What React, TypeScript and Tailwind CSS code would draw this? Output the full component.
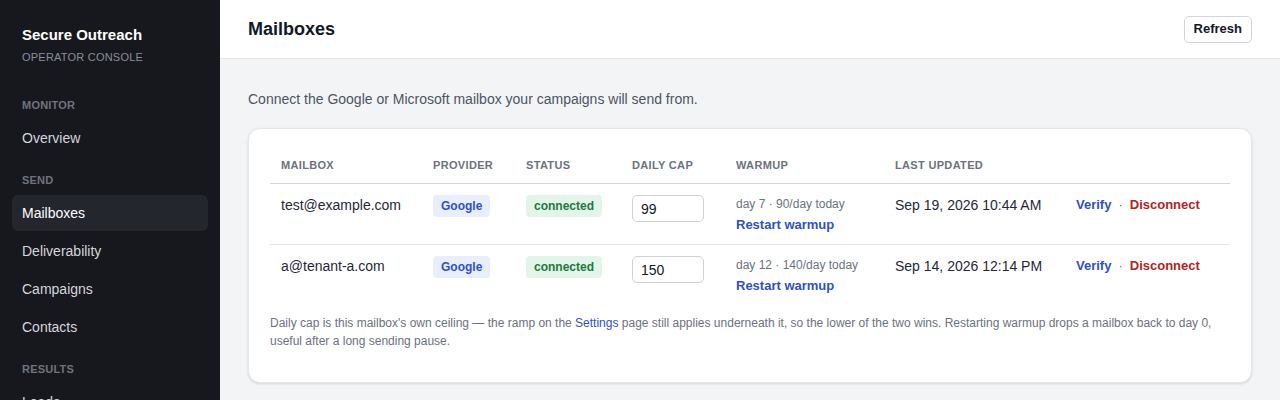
import { useState } from "react";

const navSections = [
  { label: "MONITOR", items: ["Overview"] },
  { label: "SEND", items: ["Mailboxes", "Deliverability", "Campaigns", "Contacts"] },
  { label: "RESULTS", items: ["Leads", "Replies"] },
];

const mailboxes = [
  {
    email: "test@example.com",
    provider: "Google",
    status: "connected",
    cap: "99",
    warmup: "day 7 · 90/day today",
    updated: "Sep 19, 2026 10:44 AM",
  },
  {
    email: "a@tenant-a.com",
    provider: "Google",
    status: "connected",
    cap: "150",
    warmup: "day 12 · 140/day today",
    updated: "Sep 14, 2026 12:14 PM",
  },
];

const Sidebar = () => (
  <aside className="w-[220px] shrink-0 bg-[#17181d] px-3 pt-[25px]">
    <div className="px-[10px]">
      <div className="text-[15px] font-bold leading-5 text-white">Secure Outreach</div>
      <div className="mt-[4px] text-[11px] leading-4 tracking-[0.02em] text-[#8a8e98]">
        OPERATOR CONSOLE
      </div>
    </div>
    <nav className="mt-8">
      {navSections.map((section) => (
        <div key={section.label} className="mb-[16px]">
          <div className="px-[10px] text-[11px] font-bold leading-4 tracking-[0.02em] text-[#6f737d]">
            {section.label}
          </div>
          <ul className="mt-[7px] flex flex-col gap-[2px]">
            {section.items.map((item) => (
              <li
                key={item}
                className={
                  item === "Mailboxes"
                    ? "flex h-9 items-center rounded-md bg-[#24262e] px-[10px] text-[14px] text-white"
                    : "flex h-9 items-center rounded-md px-[10px] text-[14px] text-[#d4d6db]"
                }
              >
                {item}
              </li>
            ))}
          </ul>
        </div>
      ))}
    </nav>
  </aside>
);

const MailboxRow = ({ row, last }: { row: (typeof mailboxes)[number]; last: boolean }) => {
  const [cap, setCap] = useState(row.cap);
  const cell = "px-[11px] pt-[11px] pb-[10px] align-top";
  return (
    <tr className={last ? "" : "border-b border-[#e5e7eb]"}>
      <td className={`${cell} text-[14px] leading-5 text-[#1f2937]`}>{row.email}</td>
      <td className={cell}>
        <span className="flex h-[22px] w-fit items-center rounded-[4px] bg-[#e8eefc] px-[8px] text-[12px] font-bold text-[#3050c8]">
          {row.provider}
        </span>
      </td>
      <td className={cell}>
        <span className="flex h-[22px] w-fit items-center rounded-[4px] bg-[#e3f4e8] px-[8px] text-[12px] font-bold text-[#1d7a3e]">
          {row.status}
        </span>
      </td>
      <td className={cell}>
        <input
          value={cap}
          onChange={(e) => setCap(e.target.value)}
          className="block h-[27px] w-[72px] rounded-[5px] border border-[#cfd3d9] bg-white px-[8px] text-[14px] text-[#111827] outline-none"
        />
      </td>
      <td className={cell}>
        <div className="text-[12px] leading-[18px] text-[#6b7280]">{row.warmup}</div>
        <div className="mt-[3px] text-[13px] font-bold leading-[18px] text-[#3050c8]">Restart warmup</div>
      </td>
      <td className={`${cell} text-[14px] leading-5 text-[#1f2937]`}>{row.updated}</td>
      <td className={`${cell} text-[13px] font-bold leading-5`}>
        <span className="text-[#3050c8]">Verify</span>
        <span className="mx-[7px] font-normal text-[#6b7280]">·</span>
        <span className="text-[#b42323]">Disconnect</span>
      </td>
    </tr>
  );
};

const App = () => {
  const headers = ["MAILBOX", "PROVIDER", "STATUS", "DAILY CAP", "WARMUP", "LAST UPDATED", ""];
  return (
    <div className="flex h-[400px] overflow-hidden bg-[#f3f4f6] font-['Liberation_Sans',Arial,sans-serif]">
      <Sidebar />
      <div className="flex min-w-0 flex-1 flex-col">
        <header className="flex h-[59px] shrink-0 items-center justify-between border-b border-[#e5e7eb] bg-white px-7">
          <h1 className="text-[18px] font-bold text-[#111827]">Mailboxes</h1>
          <button className="h-[27px] rounded-[5px] border border-[#d1d5db] bg-white px-[9px] text-[13px] font-bold text-[#111827]">
            Refresh
          </button>
        </header>
        <main className="px-7 pt-[30px]">
          <p className="text-[14px] leading-5 text-[#4b5563]">
            Connect the Google or Microsoft mailbox your campaigns will send from.
          </p>
          <div className="mt-[19px] rounded-xl border border-[#e5e7eb] bg-white px-[21px] pb-[32px] pt-[22px] shadow-sm">
            <table className="w-full table-fixed border-collapse">
              <colgroup>
                <col className="w-[152px]" />
                <col className="w-[93px]" />
                <col className="w-[106px]" />
                <col className="w-[104px]" />
                <col className="w-[159px]" />
                <col className="w-[181px]" />
                <col />
              </colgroup>
              <thead>
                <tr className="border-b border-[#d1d5db]">
                  {headers.map((h, i) => (
                    <th
                      key={i}
                      className="px-[11px] pb-[10px] pt-[6px] text-left text-[11px] font-bold leading-4 tracking-[0.03em] text-[#6b7280]"
                    >
                      {h}
                    </th>
                  ))}
                </tr>
              </thead>
              <tbody>
                {mailboxes.map((row, i) => (
                  <MailboxRow key={row.email} row={row} last={i === mailboxes.length - 1} />
                ))}
              </tbody>
            </table>
            <p className="mt-[9px] text-[12px] leading-[18px] text-[#6b7280]">
              Daily cap is this mailbox's own ceiling — the ramp on the{" "}
              <span className="text-[#3050c8]">Settings</span> page still applies underneath it, so the lower
              of the two wins. Restarting warmup drops a mailbox back to day 0, useful after a long sending
              pause.
            </p>
          </div>
        </main>
      </div>
    </div>
  );
};

export default App;
